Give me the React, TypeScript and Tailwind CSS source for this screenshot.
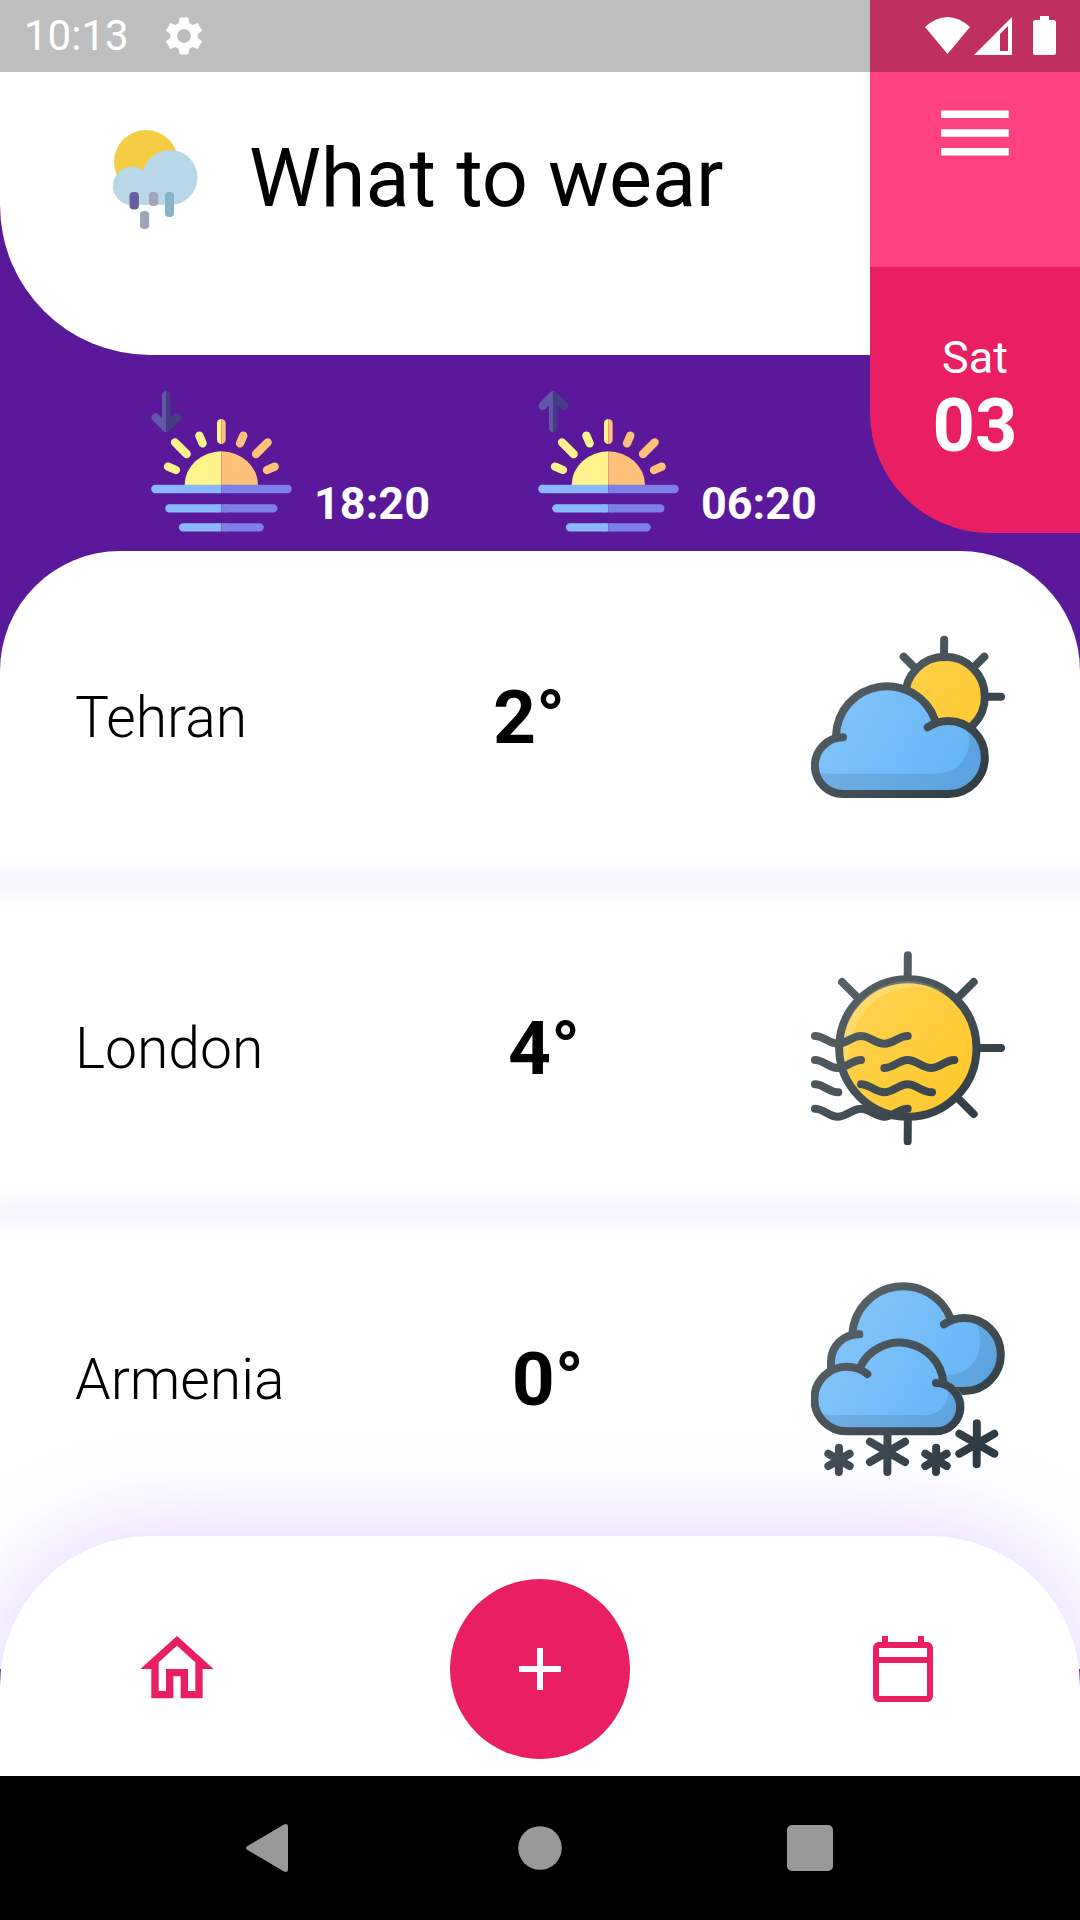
import React from "react";
import {
  MdAdd,
  MdMenu,
  MdOutlineCalendarToday,
  MdOutlineHome,
  MdSettings,
} from "react-icons/md";

const WHITE = "#ffffff";

function StatusBar() {
  return (
    <div className="absolute inset-x-0 top-0 flex h-[72px] items-center justify-between bg-black/25 pl-6 pr-6 text-white">
      <div className="flex items-center gap-8">
        <span className="text-[42px] leading-[48px]">10:13</span>
        <MdSettings className="size-[46px]" />
      </div>
      <svg className="h-10 w-[132px]" viewBox="924 16 132 40" fill={WHITE} aria-label="Wi-Fi, signal and battery" role="img">
        <path d="M925 27Q947.500 7 970 27L947.500 54Z" />
        <path fillRule="evenodd" d="M974 55L1012 17V55ZM1000 34V51H1008V26Z" />
        <path d="M1040 16H1049V20H1053.500Q1056 20 1056 22.500V52.500Q1056 55 1053.500 55H1035.500Q1033 55 1033 52.500V22.500Q1033 20 1035.500 20H1040Z" />
      </svg>
    </div>
  );
}

function Logo() {
  return (
    <svg className="size-[100px]" viewBox="105 130 100 100" aria-hidden="true">
      <circle cx="146" cy="162" r="32" fill="#f5cd44" />
      <g fill="#b8d7e7">
        <circle cx="170" cy="177.500" r="27.500" />
        <circle cx="132" cy="186" r="19.200" />
        <rect x="131" y="180" width="40" height="25" />
      </g>
      <rect x="129.500" y="192" width="9.400" height="17.500" rx="4" fill="#64609b" />
      <rect x="149" y="192" width="9.200" height="14" rx="4" fill="#a0a5b8" />
      <rect x="165" y="192" width="9" height="25" rx="4" fill="#84b3ca" />
      <rect x="140" y="211" width="9.200" height="18" rx="4" fill="#a0a5b8" />
    </svg>
  );
}

function HorizonIcon({ rising }: { rising: boolean }) {
  return (
    <svg className="size-[141px]" viewBox="93 62 423 423" fill="none" strokeLinecap="round" aria-hidden="true">
      <g transform={rising ? "matrix(1 0 0 -1 0 248)" : undefined} strokeWidth="25" strokeLinejoin="round">
        <path d="M126 74A13 12 0 0 1 139 62V186Q134 186 130 182L97 149A12.500 12.500 0 0 1 115 132L126 142Z" fill="#6156a8" />
        <path d="M151 74A13 12 0 0 0 139 62V186Q144 186 148 182L181 149A12.500 12.500 0 0 0 163 132L151 142Z" fill="#453d83" />
      </g>
      <path d="M194 344A110 101 0 0 1 304 243V344Z" fill="#fff38b" />
      <path d="M414 344A110 101 0 0 0 304 243V344Z" fill="#ffc179" />
      <path d="M304 146A13 13 0 0 0 291 159V208A13 13 0 0 0 304 221Z" fill="#fff38b" />
      <path d="M304 146A13 13 0 0 1 317 159V208A13 13 0 0 1 304 221Z" fill="#ffc179" />
      <g stroke="#fff38b" strokeWidth="25">
        <path d="M238 196L248 219M165 216L200 251M144 289L168 299" />
      </g>
      <g stroke="#ffc179" strokeWidth="25">
        <path d="M370 196L360 219M443 216L408 251M464 289L441 299" />
      </g>
      <g stroke="#8ab8ff" strokeWidth="25">
        <path d="M106 356H290M148 414H290M189 471H290" />
      </g>
      <g stroke="#7d80e6" strokeWidth="25">
        <path d="M318 356H503M318 414H460M318 471H419" />
      </g>
      <path d="M290 343.500H304V368.500H290ZM290 401.500H304V426.500H290ZM290 458.500H304V483.500H290Z" fill="#8ab8ff" />
      <path d="M304 343.500H320V368.500H304ZM304 401.500H320V426.500H304ZM304 458.500H320V483.500H304Z" fill="#7d80e6" />
    </svg>
  );
}

function Gradients({ id }: { id: string }) {
  return (
    <defs>
      <linearGradient id={`${id}-line`} gradientUnits="userSpaceOnUse" x1="150" y1="120" x2="600" y2="570">
        <stop offset="0" stopColor="#5b6569" />
        <stop offset="1" stopColor="#2f3b43" />
      </linearGradient>
      <linearGradient id={`${id}-sky`} gradientUnits="userSpaceOnUse" x1="120" y1="250" x2="560" y2="500">
        <stop offset="0" stopColor="#84c4fa" />
        <stop offset="1" stopColor="#64b5f6" />
      </linearGradient>
      <linearGradient id={`${id}-sun`} gradientUnits="userSpaceOnUse" x1="240" y1="200" x2="560" y2="480">
        <stop offset="0" stopColor="#ffd24f" />
        <stop offset="1" stopColor="#ffc92c" />
      </linearGradient>
    </defs>
  );
}

function PartlyCloudy() {
  return (
    <svg className="size-[194px]" viewBox="93 28 582 582" fill="none" role="img" aria-label="Partly cloudy">
      <Gradients id="partly" />
      <g stroke="url(#partly-line)" strokeWidth="24" strokeLinecap="round">
        <circle cx="495" cy="258" r="119.500" fill="url(#partly-sun)" />
        <path d="M492.500 87L492 140M613 138L584 167M371 138L400 167M616 258L663 257.900" />
        <path
          d="M190 380L168 378A153 153 0 0 1 466 334L505 331A109.500 109.500 0 0 1 505 550H190A85 85 0 0 1 190 380Z"
          fill="url(#partly-sky)"
          stroke="none"
        />
        <path
          d="M105 475C118 488 135 489 150 489H472A95 95 0 0 0 567 394C567 376 566 364 561 346A109.500 109.500 0 0 1 505 550H190A85 85 0 0 1 105 475Z"
          fill="#1f2f50"
          fillOpacity="0.13"
          stroke="none"
        />
        <path d="M189 380A85 85 0 0 0 190 550H505A109.500 109.500 0 0 0 505 331Q470 331 443 350" />
        <path d="M168 376A153 153 0 0 1 465 328" />
      </g>
    </svg>
  );
}

function Hazy() {
  return (
    <svg className="size-[194px]" viewBox="93 62 582 582" fill="none" role="img" aria-label="Hazy sun">
      <Gradients id="hazy" />
      <g stroke="url(#hazy-line)" strokeWidth="24" strokeLinecap="round">
        <circle cx="383.500" cy="353" r="206" fill="url(#hazy-sun)" />
        <path d="M200 410A195 195 0 0 1 500 190Q410 148 310 195Q210 250 200 410Z" fill="#ffffff" fillOpacity="0.18" stroke="none" />
        <path d="M383.500 75L383 140M383.500 568L383 633M600 353L663 352.900M581 155L536 200M186 155L231 200M581 551L536 506" />
        <path d="M105 317C131 317 147 340 173 340S217 317 243 317S287 340 313 340S357 317 383 317" />
        <path d="M105 389C131 389 147 413 173 413S217 389 243 389" />
        <path d="M313 413C339 413 357 389 383 389S427 413 453 413S497 389 523 389" />
        <path d="M105 462C131 462 147 486 175 486" />
        <path d="M243 462C269 462 287 486 313 486S357 462 383 462S427 486 456 486" />
        <path d="M105 535C131 535 147 559 173 559S217 535 243 535S287 559 313 559S357 535 383 535" />
      </g>
    </svg>
  );
}

function Snow() {
  return (
    <svg className="size-[194px]" viewBox="93 66 582 582" fill="none" role="img" aria-label="Snow">
      <Gradients id="snow" />
      <g stroke="url(#snow-line)" strokeWidth="24" strokeLinecap="round">
        <path
          d="M153 330V305A85 85 0 0 1 217 225A153 153 0 0 1 512 176L553 174A109.500 109.500 0 0 1 553 393H500L400 440L200 400Z"
          fill="url(#snow-sky)"
          stroke="none"
        />
        <path d="M582 178C616 230 612 345 492 346L520 393H553A109.500 109.500 0 0 0 582 178Z" fill="#1f2f50" fillOpacity="0.13" stroke="none" />
        <path d="M153 322V305A82 82 0 0 1 238 223" />
        <path d="M217 220A153 153 0 0 1 512 176" />
        <path d="M492 193Q518 174 553 174A109.500 109.500 0 0 1 553 393H520" />
        <path
          d="M200 320L240 328A132 132 0 0 1 490 365A74 74 0 0 1 468 514H200A97 97 0 0 1 200 320Z"
          fill="url(#snow-sky)"
          stroke="none"
        />
        <path
          d="M107 442C125 463 140 465 152 465H438A67 67 0 0 0 505 398V381A72 72 0 0 1 468 514H200A97 97 0 0 1 107 442Z"
          fill="#1f2f50"
          fillOpacity="0.13"
          stroke="none"
        />
        <path d="M240 322A132 132 0 0 1 490 366" />
        <path d="M262 342Q236 320 200 320A97 97 0 0 0 200 514H468A72.500 72.500 0 0 0 468 369" />
        <path d="M177 563L176.500 636M145 581L209 618M209 581L145 618" />
        <path d="M322.500 516L322 636M270 545L375 606M375 545L270 606" />
        <path d="M468.500 563L468 636M436 581L500 618M500 581L436 618" />
        <path d="M590.500 490L590 613M538 521L643 581M643 521L538 581" />
      </g>
    </svg>
  );
}

const cities = [
  { name: "Tehran", temp: "2°", Icon: PartlyCloudy },
  { name: "London ", temp: "4°", Icon: Hazy },
  { name: "Armenia", temp: "0°", Icon: Snow },
];

function SunTime({ time, rising }: { time: string; rising: boolean }) {
  return (
    <div className="flex items-end gap-[22px]">
      <HorizonIcon rising={rising} />
      <span className="text-[45px] font-bold leading-[56px] text-white">{time}</span>
    </div>
  );
}

export default function App() {
  return (
    <div className="relative flex min-h-screen flex-col overflow-hidden bg-[#5a189a] font-['Roboto',sans-serif] text-black">
      <header className="flex">
        <div className="flex-1">
          <div className="flex h-[355px] items-start gap-11 rounded-bl-[150px] bg-white pl-[105px] pt-[130px]">
            <Logo />
            <h1 className="text-[81px] leading-[98px]">What to wear</h1>
          </div>
          <div className="flex h-[196px] items-start gap-[108px] pl-[151px] pt-9">
            <SunTime time="18:20" rising={false} />
            <SunTime time="06:20" rising />
          </div>
        </div>
        <div className="flex h-[533px] w-[210px] flex-col overflow-hidden rounded-bl-[120px] bg-[#e91e63] text-white">
          <div className="flex h-[267px] justify-center bg-[#ff4081] pt-[88px]">
            <button type="button" aria-label="Menu" className="size-[90px]">
              <MdMenu className="size-[90px]" />
            </button>
          </div>
          <div className="flex flex-col items-center pt-16">
            <span className="text-[45px] leading-[53px]">Sat</span>
            <span className="text-[74px] font-bold leading-[84px]">03</span>
          </div>
        </div>
      </header>

      <main className="flex-1 rounded-t-[120px] bg-white">
        <ul>
          {cities.map(({ name, temp, Icon }, i) => (
            <li key={name}>
              {i > 0 && <hr className="h-0 border-0 shadow-[0_0_20px_10px_#f3f0fe]" />}
              <div className="flex h-[331px] items-center justify-between px-[75px]">
                <span className="whitespace-pre pt-0.5 text-[57px] font-light leading-[68px]">{name}</span>
                <span className="text-[75px] font-bold leading-[88px]">{temp}</span>
                <Icon />
              </div>
            </li>
          ))}
        </ul>
      </main>

      <nav className="relative -mt-[133px] flex h-[240px] items-center justify-between rounded-t-[150px] bg-white px-[133px] pt-[26px] text-[#e91e63] shadow-[0_0_100px_rgba(124,77,255,0.26)]">
        <button type="button" aria-label="Home">
          <MdOutlineHome className="size-[88px]" />
        </button>
        <button type="button" aria-label="Add city" className="flex size-[180px] items-center justify-center rounded-full bg-[#e91e63] text-white">
          <MdAdd className="size-[72px]" />
        </button>
        <button type="button" aria-label="Calendar" className="flex size-[88px] items-center justify-center">
          <MdOutlineCalendarToday className="size-[72px]" />
        </button>
      </nav>

      <div className="relative flex h-[144px] items-center justify-center gap-[198px] bg-black text-[#999999]">
        <button type="button" aria-label="Back">
          <svg className="size-[72px]" viewBox="0 0 72 72" fill="currentColor">
            <path d="M50 12.500Q54 11 54 15V57Q54 61 50 59.500L13.500 38Q10.500 36 13.500 34Z" />
          </svg>
        </button>
        <button type="button" aria-label="Home screen">
          <svg className="size-[72px]" viewBox="0 0 72 72" fill="currentColor">
            <circle cx="36" cy="36" r="21.800" />
          </svg>
        </button>
        <button type="button" aria-label="Recent apps">
          <svg className="size-[72px]" viewBox="0 0 72 72" fill="currentColor">
            <rect x="13" y="13" width="46" height="46" rx="5" />
          </svg>
        </button>
      </div>

      <StatusBar />
    </div>
  );
}
